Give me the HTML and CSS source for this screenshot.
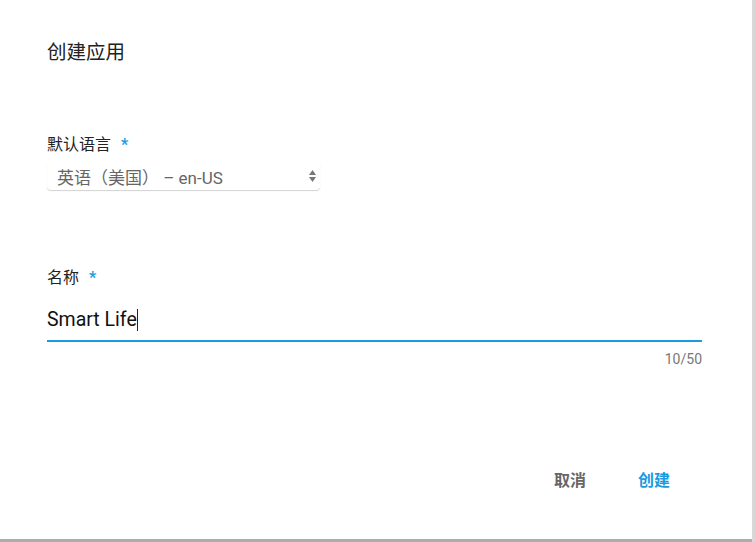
FILE: index.html
```html
<!DOCTYPE html>
<html lang="zh-CN">
<head>
    <meta charset="UTF-8">
    <title>创建应用</title>
    <link rel="stylesheet" href="styles.css">
</head>
<body>

<div class="dialog">
    <h2 class="title">创建应用</h2>

    <div class="field field-lang">
        <label class="label">默认语言 <span class="req">*</span></label>
        <div class="select">
            <span class="select-text">英语（美国） – en-US</span>
            <svg class="arrows" width="9" height="14" viewBox="0 0 9 14">
                <path d="M4.5 1 L8 6 L1 6 Z" fill="#777"/>
                <path d="M4.5 13 L8 8 L1 8 Z" fill="#777"/>
            </svg>
        </div>
    </div>

    <div class="field field-name">
        <label class="label">名称 <span class="req">*</span></label>
        <div class="input">Smart Life<span class="caret"></span></div>
        <div class="counter">10/50</div>
    </div>

    <div class="actions">
        <button class="btn btn-cancel">取消</button>
        <button class="btn btn-ok">创建</button>
    </div>
</div>

</body>
</html>
```

FILE: styles.css
```css
html, body {
    margin: 0;
    padding: 0;
    background-color: #d8d8d8;
}
body {
    font-family: Roboto, "Noto Sans CJK SC", sans-serif;
    width: 755px;
    height: 542px;
    overflow: hidden;
}
.dialog {
    width: 752px;
    height: 539px;
    box-sizing: border-box;
    background-color: white;
    box-shadow: 0 3px 0 #adadad;
    padding: 40px 50px 0 47px;
    display: flex;
    flex-direction: column;
}
.title {
    margin: 0;
    font-size: 19.5px;
    font-weight: normal;
    line-height: 26px;
    color: #222;
}
.label {
    display: block;
    font-size: 16px;
    line-height: 22px;
    height: 22px;
    color: #222;
}
.req {
    color: #1a9be0;
    font-weight: bold;
    margin-left: 6px;
}
.field-lang {
    margin-top: 68px;
}
.select {
    width: 273px;
    height: 28px;
    margin-top: 6px;
    box-sizing: border-box;
    display: flex;
    align-items: center;
    justify-content: space-between;
    padding: 0 3px 0 10px;
    border-radius: 4px;
    box-shadow: 0 1px 1px rgba(0, 0, 0, 0.18);
}
.select-text {
    font-size: 17px;
    color: #666;
}
.field-name {
    margin-top: 77px;
}
.input {
    margin-top: 16px;
    height: 35px;
    font-size: 19.5px;
    line-height: 30px;
    color: #111;
    border-bottom: 2px solid #1a9be0;
    display: flex;
    align-items: flex-start;
}
.caret {
    display: inline-block;
    width: 1px;
    height: 22px;
    margin-top: 4px;
    background-color: #222;
}
.counter {
    text-align: right;
    font-size: 14px;
    line-height: 18px;
    margin-top: 8px;
    color: #777;
}
.actions {
    margin-top: 101px;
    padding-right: 32px;
    display: flex;
    justify-content: flex-end;
    gap: 52px;
}
.btn {
    background: none;
    border: none;
    padding: 0;
    font-family: Roboto, "Noto Sans CJK SC", sans-serif;
    font-size: 16px;
    font-weight: bold;
    line-height: 24px;
    cursor: pointer;
}
.btn-cancel {
    color: #666;
}
.btn-ok {
    color: #1a9be0;
}
```
